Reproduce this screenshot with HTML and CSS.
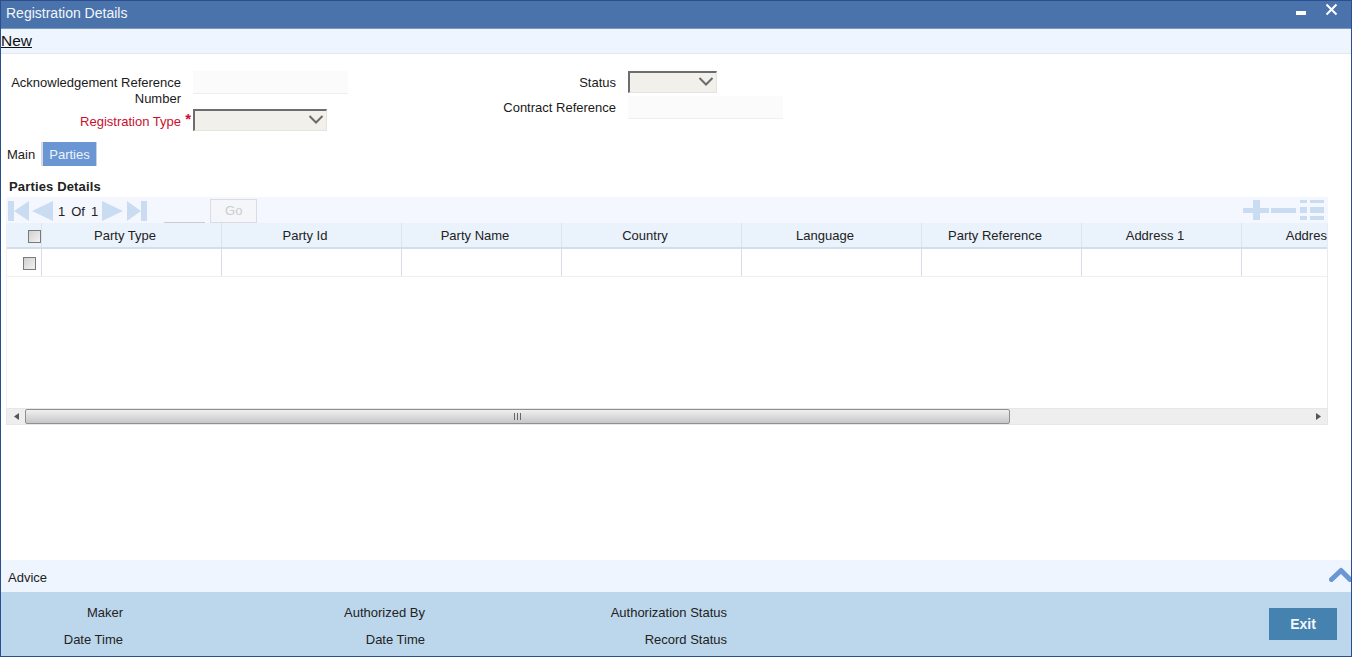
FILE: index.html
```html
<!DOCTYPE html>
<html lang="en">
<head>
<meta charset="utf-8">
<title>Registration Details</title>
<link rel="stylesheet" href="styles.css">
</head>
<body>
<div class="window">
  <header class="titlebar">
    <span class="title">Registration Details</span>
    <div class="win-controls">
      <svg class="win-min" width="10" height="4" viewBox="0 0 10 4"><rect width="10" height="4" fill="#fff"/></svg>
      <svg class="win-close" width="13" height="13" viewBox="0 0 13 13"><path d="M1.5 1.5l10 10M11.5 1.500l-10 10" stroke="#fff" stroke-width="2" fill="none"/></svg>
    </div>
  </header>
  <nav class="toolbar"><span class="new-link">New</span></nav>
  <main class="content">
    <section class="form">
      <div class="form-col form-col-left">
        <div class="field field-ack">
          <label class="label">Acknowledgement Reference Number</label>
          <div class="input-box"></div>
        </div>
        <div class="field field-type">
          <label class="label label-req">Registration Type<span class="star">*</span></label>
          <div class="select select-wide"><svg class="chev" width="16" height="9" viewBox="0 0 16 9"><path d="M1.5 1l6.500 6.500L14.500 1" stroke="#6b6b6b" stroke-width="2" fill="none"/></svg></div>
        </div>
      </div>
      <div class="form-col form-col-right">
        <div class="field field-status">
          <label class="label">Status</label>
          <div class="select select-narrow"><svg class="chev" width="16" height="9" viewBox="0 0 16 9"><path d="M1.5 1l6.500 6.500L14.500 1" stroke="#6b6b6b" stroke-width="2" fill="none"/></svg></div>
        </div>
        <div class="field field-contract">
          <label class="label">Contract Reference</label>
          <div class="input-box"></div>
        </div>
      </div>
    </section>
    <div class="tabs">
      <span class="tab">Main</span>
      <span class="tab tab-active">Parties</span>
    </div>
    <h2 class="section-title">Parties Details</h2>
    <div class="grid-wrap">
      <div class="pager">
        <div class="pager-left">
          <svg class="pg pg-first" width="21" height="20" viewBox="0 0 21 20"><path d="M0 0h6v20H0zM21 0v20L6 10z" fill="#c9dcf2"/></svg>
          <svg class="pg pg-prev" width="21" height="20" viewBox="0 0 21 20"><path d="M21 0v20L0 10z" fill="#c9dcf2"/></svg>
          <span class="pg-num pg-num-a">1</span><span class="pg-num pg-of">Of</span><span class="pg-num">1</span>
          <svg class="pg pg-next" width="21" height="20" viewBox="0 0 21 20"><path d="M0 0v20l21-10z" fill="#c9dcf2"/></svg>
          <svg class="pg pg-last" width="20" height="20" viewBox="0 0 20 20"><path d="M0 0v20l14-10zM14 0h6v20h-6z" fill="#c9dcf2"/></svg>
          <span class="pg-input"></span>
          <span class="go-btn">Go</span>
        </div>
        <svg class="pager-tools" width="82" height="20" viewBox="0 0 82 20" fill="#c9dcf2"><path d="M0 8h10V0h7v8h9v5h-9v7h-7v-7H0z"/><path d="M28 8h25v5H28z"/><path d="M57 0h7v3h-7zM67 0h14v3H67zM57 7h7v6h-7zM67 7h14v6H67zM57 16h7v4h-7zM67 16h14v4H67z"/></svg>
      </div>
      <div class="table-viewport">
        <table class="grid">
          <colgroup>
            <col class="c-check"><col class="c-180"><col class="c-180"><col class="c-160"><col class="c-180"><col class="c-180"><col class="c-160"><col class="c-160"><col class="c-160">
          </colgroup>
          <thead>
            <tr>
              <th class="th-check"><span class="check check-head"></span></th>
              <th>Party Type</th><th>Party Id</th><th>Party Name</th><th>Country</th><th>Language</th><th>Party Reference</th><th>Address 1</th><th>Address 2</th>
            </tr>
          </thead>
          <tbody>
            <tr>
              <td><span class="check check-row"></span></td>
              <td></td><td></td><td></td><td></td><td></td><td></td><td></td><td></td>
            </tr>
          </tbody>
        </table>
      </div>
      <div class="scrollbar">
        <span class="sb-btn"><svg width="5" height="7" viewBox="0 0 5 7"><path d="M5 0v7L0 3.500z" fill="#555"/></svg></span>
        <span class="sb-thumb"><svg width="8" height="7" viewBox="0 0 8 7"><path d="M0 0h1v7H0zM3 0h1v7H3zM6 0h1v7H6z" fill="#666"/></svg></span>
        <span class="sb-track"></span>
        <span class="sb-btn sb-btn-right"><svg width="5" height="7" viewBox="0 0 5 7"><path d="M0 0v7l5-3.500z" fill="#555"/></svg></span>
      </div>
    </div>
  </main>
  <div class="advice">
    <span class="advice-text">Advice</span>
    <svg class="advice-chev" width="23" height="15" viewBox="0 0 23 15"><path d="M2.500 12.500L12 3.500l9 9" stroke="#6a96d4" stroke-width="5" stroke-linejoin="round" stroke-linecap="round" fill="none"/></svg>
  </div>
  <footer class="footer">
    <div class="audit audit-1"><span>Maker</span><span>Date Time</span></div>
    <div class="audit audit-2"><span>Authorized By</span><span>Date Time</span></div>
    <div class="audit audit-3"><span>Authorization Status</span><span>Record Status</span></div>
    <button class="exit" type="button">Exit</button>
  </footer>
</div>
</body>
</html>
```
FILE: styles.css
```css
* { box-sizing: border-box; }
html, body { margin: 0; padding: 0; }
body {
  width: 1352px;
  height: 657px;
  overflow: hidden;
  background: #fff;
  font-family: "Liberation Sans", Arial, sans-serif;
  font-size: 13px;
  color: #1a1a1a;
}
.window {
  width: 1352px;
  height: 657px;
  display: flex;
  flex-direction: column;
  border: 1px solid #2b4f8e;
  overflow: hidden;
}
.titlebar {
  flex: 0 0 28px;
  display: flex;
  justify-content: space-between;
  background: #4a73ab;
  border-bottom: 1px solid #7d99b8;
  padding: 0 13px 0 5px;
}
.title { color: #f2f6fb; font-size: 14px; line-height: 24px; }
.win-controls { display: flex; align-items: flex-start; gap: 19px; height: 100%; }
.win-min { margin-top: 10px; }
.win-close { margin-top: 2px; }
.toolbar {
  flex: 0 0 25px;
  background: #eef5fe;
  border-bottom: 1px solid #e4e8ee;
  line-height: 23px;
}
.new-link { font-size: 15.500px; text-decoration: underline; color: #111; }
.content { flex: 1 1 auto; min-height: 0; }
.form { display: flex; padding-top: 17px; height: 88px; }
.form-col { display: flex; flex-direction: column; }
.form-col-left { width: 347px; }
.form-col-right { width: 435px; }
.field { display: flex; align-items: flex-start; }
.label { text-align: right; line-height: 16px; padding-top: 4px; }
.form-col-left .label { width: 180px; margin-right: 12px; }
.form-col-right .label { width: 268px; margin-right: 12px; }
.field-ack { height: 38px; }
.field-status { height: 25px; }
.label-req { position: relative; color: #c8102e; padding-top: 5px; }
.star {
  position: absolute;
  right: -10px;
  top: 2px;
  font-size: 15px;
  font-weight: bold;
}
.input-box {
  width: 155px;
  height: 23px;
  background: #fbfbfb;
  border-bottom: 1px solid #eeeeee;
}
.select {
  position: relative;
  height: 22px;
  background: #f1f0eb;
  border-top: 2px solid #6d6d6d;
  border-left: 2px solid #6d6d6d;
  border-right: 1px solid #e4e3de;
  border-bottom: 1px solid #e4e3de;
}
.select-wide { width: 134px; }
.select-narrow { width: 89px; }
.chev { position: absolute; right: 2px; top: 4px; }
.tabs { display: flex; align-items: stretch; height: 24px; padding-left: 6px; }
.tab { line-height: 25px; width: 36px; border-right: 2px solid #d5dce6; }
.tab-active {
  width: 54px;
  text-align: center;
  background: #6a96d4;
  color: #eef3fa;
  border-right: 1px solid #c7d2e2;
}
.section-title {
  margin: 13px 0 3px 8px;
  font-size: 13px;
  font-weight: bold;
  letter-spacing: 0.15px;
  line-height: 15px;
  color: #222;
}
.grid-wrap { margin-left: 5px; width: 1322px; }
.pager {
  height: 26px;
  display: flex;
  align-items: center;
  justify-content: space-between;
  background: #f4f8fe;
  padding: 2px 2px 0 2px;
}
.pager-left { display: flex; align-items: center; }
.pg { display: block; }
.pg-prev { margin-left: 3px; }
.pg-num { color: #222; margin-left: 6px; }
.pg-num-a { margin-left: 5px; }
.pg-next { margin-left: 4px; }
.pg-last { margin-left: 4px; }
.pg-input {
  width: 41px;
  height: 23px;
  margin-left: 17px;
  border-bottom: 1px solid #c9ccd1;
}
.go-btn {
  width: 47px;
  height: 24px;
  margin-left: 5px;
  text-align: center;
  line-height: 22px;
  color: #c9cdd3;
  background: #f4f6f9;
  border: 1px solid #d9dde3;
}
.pager-tools { margin: -3px 1px 0 0; }
.table-viewport {
  height: 185px;
  overflow: hidden;
  border-left: 1px solid #eef0f3;
  border-right: 1px solid #e8ebef;
}
.grid { border-collapse: collapse; table-layout: fixed; width: 1394px; }
.c-check { width: 34px; }
.c-180 { width: 180px; }
.c-160 { width: 160px; }
.grid th {
  height: 25px;
  padding: 0 12px 0 0;
  background: #eaf2fc;
  font-weight: normal;
  font-size: 13px;
  text-align: center;
  white-space: nowrap;
  color: #222;
  border-right: 1px solid #dbe3ee;
  border-bottom: 2px solid #d4deea;
}
.grid .th-check { padding: 0; }
.grid td {
  height: 28px;
  padding: 0;
  text-align: center;
  border-right: 1px solid #d6dde8;
  border-bottom: 1px solid #f4eee8;
}
.check {
  display: block;
  width: 13px;
  height: 13px;
  background: linear-gradient(135deg, #d0d0d0, #f2f2f2);
  border: 1px solid #7a7a7a;
}
.check-head { margin-left: 21px; margin-top: 2px; }
.check-row { margin-left: 16px; margin-top: 2px; }
.scrollbar {
  height: 17px;
  display: flex;
  background: #eeeeee;
  border: 1px solid #e6e7e9;
}
.sb-btn {
  width: 18px;
  display: flex;
  align-items: center;
  justify-content: center;
  flex: none;
}
.sb-btn-right { margin-left: auto; }
.sb-thumb {
  width: 985px;
  display: flex;
  align-items: center;
  justify-content: center;
  background: linear-gradient(#f0f0f0, #c6c6c9);
  border: 1px solid #8f8f8f;
  border-radius: 2px;
  flex: none;
}
.sb-track { flex: 1 1 auto; }
.advice {
  flex: 0 0 32px;
  display: flex;
  align-items: center;
  justify-content: space-between;
  background: #eef5fe;
  padding-left: 7px;
  color: #222;
}
.advice-text { padding-top: 2px; }
.advice-chev { margin-top: -4px; margin-right: -1px; }
.footer {
  flex: 0 0 64px;
  display: flex;
  align-items: flex-start;
  background: #bcd7ec;
  padding: 13px 14px 0 0;
  color: #222;
}
.audit {
  display: flex;
  flex-direction: column;
  align-items: flex-end;
  gap: 11px;
  line-height: 16px;
}
.audit-1 { width: 122px; }
.audit-2 { width: 302px; }
.audit-3 { width: 302px; }
.exit {
  width: 68px;
  height: 32px;
  margin: 3px 0 0 auto;
  background: #4682b0;
  border: 0;
  padding: 0;
  color: #f4f8fb;
  font: bold 14px "Liberation Sans", Arial, sans-serif;
}
```
